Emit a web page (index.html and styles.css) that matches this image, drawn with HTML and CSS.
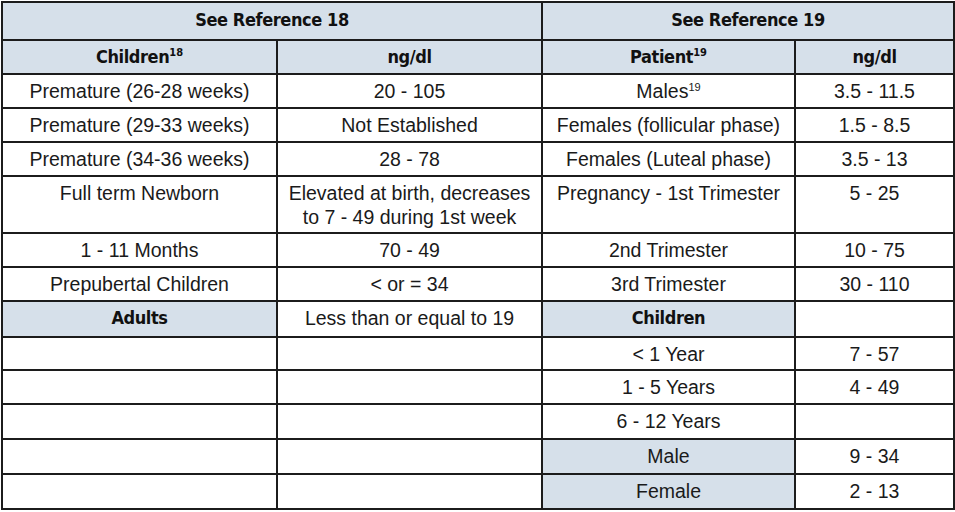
FILE: index.html
```html
<!DOCTYPE html>
<html>
<head>
<meta charset="utf-8">
<link rel="stylesheet" href="styles.css">
</head>
<body>
<table class="ref">
  <colgroup>
    <col class="c1"><col class="c2"><col class="c3"><col class="c4">
  </colgroup>
  <tr class="r-top">
    <th colspan="2">See Reference 18</th>
    <th colspan="2">See Reference 19</th>
  </tr>
  <tr class="r-head">
    <th>Children<sup>18</sup></th>
    <th>ng/dl</th>
    <th>Patient<sup>19</sup></th>
    <th>ng/dl</th>
  </tr>
  <tr><td>Premature (26-28 weeks)</td><td>20 - 105</td><td>Males<sup>19</sup></td><td>3.5 - 11.5</td></tr>
  <tr><td>Premature (29-33 weeks)</td><td>Not Established</td><td>Females (follicular phase)</td><td>1.5 - 8.5</td></tr>
  <tr><td>Premature (34-36 weeks)</td><td>28 - 78</td><td>Females (Luteal phase)</td><td>3.5 - 13</td></tr>
  <tr class="r-tall"><td>Full term Newborn</td><td>Elevated at birth, decreases<br>to 7 - 49 during 1st week</td><td>Pregnancy - 1st Trimester</td><td>5 - 25</td></tr>
  <tr><td>1 - 11 Months</td><td>70 - 49</td><td>2nd Trimester</td><td>10 - 75</td></tr>
  <tr><td>Prepubertal Children</td><td>&lt; or = 34</td><td>3rd Trimester</td><td>30 - 110</td></tr>
  <tr class="r-sub"><th>Adults</th><td>Less than or equal to 19</td><th>Children</th><td></td></tr>
  <tr class="r-s"><td></td><td></td><td>&lt; 1 Year</td><td>7 - 57</td></tr>
  <tr><td></td><td></td><td>1 - 5 Years</td><td>4 - 49</td></tr>
  <tr class="r-l"><td></td><td></td><td>6 - 12 Years</td><td></td></tr>
  <tr class="r-l"><td></td><td></td><td class="shade">Male</td><td>9 - 34</td></tr>
  <tr class="r-l"><td></td><td></td><td class="shade">Female</td><td>2 - 13</td></tr>
</table>
</body>
</html>
```
FILE: styles.css
```css
html, body {
  margin: 0;
  padding: 0;
  background: #ffffff;
}
body {
  padding: 1px 0 0 1px;
}
.ref {
  border-collapse: collapse;
  table-layout: fixed;
  width: 952px;
  font-family: "Liberation Sans", Arial, sans-serif;
  font-size: 19.5px;
  color: #1a1a1a;
}
.c1 { width: 275px; }
.c2 { width: 265px; }
.c3 { width: 253px; }
.c4 { width: 159px; }
.ref th, .ref td {
  border: 2px solid #1c1c1c;
  text-align: center;
  vertical-align: top;
  padding: 4px 4px 0;
  height: 28px;
  line-height: 24px;
  overflow: hidden;
}
.ref th {
  background: #d6e0ea;
  font-family: "DejaVu Sans Condensed", sans-serif;
  font-stretch: condensed;
  font-weight: bold;
  font-size: 18px;
  color: #111;
  letter-spacing: -0.4px;
}
.r-top th {
  height: 31px;
  padding-top: 5px;
}
.r-tall td {
  height: 51px;
}
.r-sub th, .r-sub td {
  height: 30px;
}
.r-s td { height: 27px; }
.r-l td { height: 29px; }
.ref sup {
  font-size: 11px;
  line-height: 0;
  vertical-align: 7px;
  letter-spacing: 0;
}
.ref td.shade {
  background: #d6e0ea;
}
```
